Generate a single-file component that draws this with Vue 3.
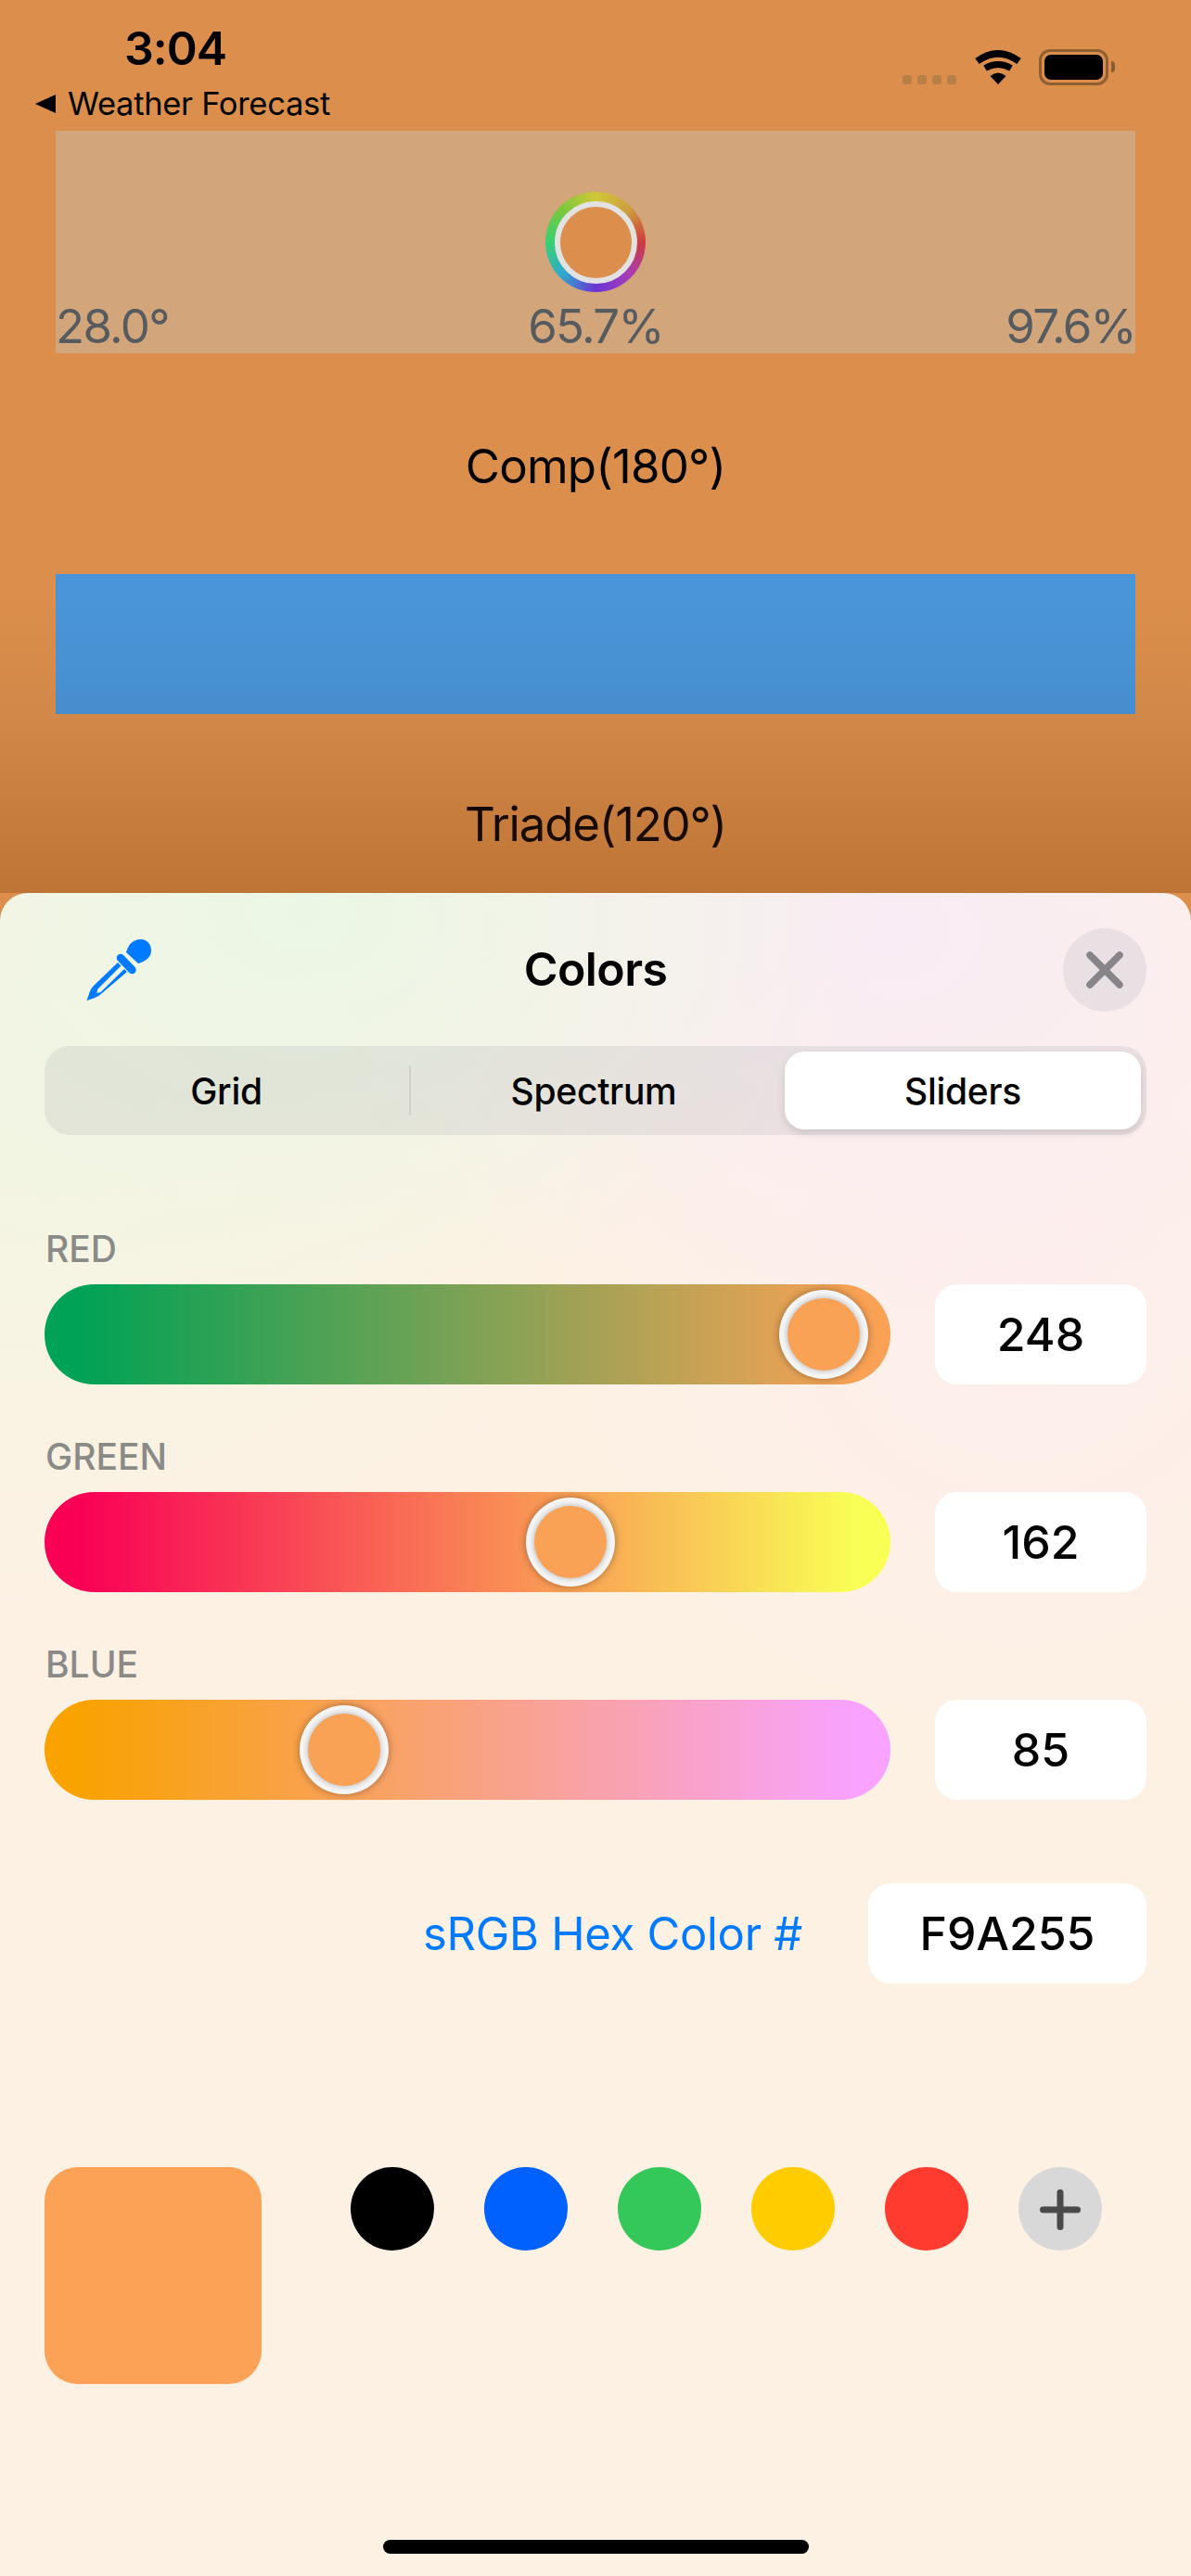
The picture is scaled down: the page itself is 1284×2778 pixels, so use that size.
<template>
  <div class="screen">
    <div class="backdrop">
      <div class="status">
        <div class="status-left">
          <div class="time">3:04</div>
          <div class="back-row">
            <span class="back-arrow"></span>
            <span class="back-text">Weather Forecast</span>
          </div>
        </div>
        <div class="status-right">
          <div class="signal">
            <span v-for="n in 4" :key="n" class="dot"></span>
          </div>
          <svg class="wifi" width="50" height="37" viewBox="0 0 50 37">
            <path d="M2.5 12Q25 -4.4 47.5 12" fill="none" stroke="#000" stroke-width="7.5" />
            <path d="M11 19.5Q25 11.5 39 19.5" fill="none" stroke="#000" stroke-width="7" />
            <path d="M25 37L16.5 28Q25 21 33.5 28Z" fill="#000" />
          </svg>
          <div class="battery">
            <div class="battery-fill"></div>
          </div>
          <span class="battery-nub"></span>
        </div>
      </div>

      <div class="picker">
        <div class="ring">
          <div class="ring-inner"></div>
        </div>
        <div class="picker-values">
          <span>28.0°</span>
          <span class="mid">65.7%</span>
          <span class="end">97.6%</span>
        </div>
      </div>

      <div class="harmony-title comp">Comp(180°)</div>
      <div class="harmony-bar"></div>
      <div class="harmony-title triade">Triade(120°)</div>

      <div class="dim"></div>
    </div>

    <div class="sheet">
      <div class="sheet-header">
        <svg class="dropper" width="72" height="72" viewBox="23 10 72 72">
          <path d="M66 27C68 20 72 13 82 13C89 13 93 19 93 25C93 33 86 37 79 39Z" fill="#007aff" />
          <path d="M60 33L72.5 46" stroke="#007aff" stroke-width="8.5" stroke-linecap="round" />
          <path fill-rule="evenodd" fill="#007aff" d="M57 38L32 62Q27 67 26 72L23.5 79L31 76.5Q36 75 40 71L67 48ZM60.5 41.5L35 67L34.5 71L38.5 70L64 45Z" />
        </svg>
        <div class="sheet-title">Colors</div>
        <button class="close">
          <svg width="44" height="44" viewBox="0 0 44 44">
            <path d="M6 6L38 38M38 6L6 38" stroke="#87848a" stroke-width="7.5" stroke-linecap="round" />
          </svg>
        </button>
      </div>

      <div class="segments">
        <div class="segment first">Grid</div>
        <div class="segment second">Spectrum</div>
        <div class="segment selected">Sliders</div>
      </div>

      <div class="sliders">
        <div v-for="s in sliders" :key="s.label" class="slider-row">
          <div class="slider-label">{{ s.label }}</div>
          <div class="slider-line">
            <div class="track" :style="{ background: s.gradient }">
              <div class="thumb" :style="{ left: thumbLeft(s.value) + 'px' }">
                <div class="thumb-inner"></div>
              </div>
            </div>
            <div class="value-box">{{ s.value }}</div>
          </div>
        </div>
      </div>

      <div class="hex-row">
        <span class="hex-label">sRGB Hex Color #</span>
        <div class="hex-box">F9A255</div>
      </div>

      <div class="palette">
        <div class="current"></div>
        <div class="swatches">
          <span v-for="c in swatches" :key="c" class="swatch" :style="{ background: c }"></span>
          <span class="swatch add">
            <svg class="plus" width="44" height="44" viewBox="0 0 44 44">
              <path d="M22 3.5V40.5" stroke="#4a4a4a" stroke-width="7" stroke-linecap="round" />
              <path d="M3.5 22H40.5" stroke="#4a4a4a" stroke-width="7" stroke-linecap="round" />
            </svg>
          </span>
        </div>
      </div>

      <div class="home-bar"></div>
    </div>
  </div>
</template>

<script setup>
const sliders = [
  { label: 'RED', value: 248, gradient: 'linear-gradient(90deg, rgb(0,162,85) 4%, rgb(249,162,85) 96%)' },
  { label: 'GREEN', value: 162, gradient: 'linear-gradient(90deg, rgb(249,0,85) 4%, rgb(249,255,85) 96%)' },
  { label: 'BLUE', value: 85, gradient: 'linear-gradient(90deg, rgb(249,162,0) 4%, rgb(249,162,255) 96%)' }
]

const swatches = ['#000000', '#0061fe', '#34c759', '#ffcc00', '#ff3b30']

// the thumb's centre moves about 3.17px for each step of the value
const thumbLeft = (value) => 53 + value * 3.174
</script>

<style scoped>
.screen {
  width: 1284px;
  height: 2778px;
  overflow: hidden;
  background: #dc8f4c;
  font-family: Inter, "Liberation Sans", sans-serif;
  color: #000;
}

.backdrop {
  position: relative;
  height: 963px;
  overflow: hidden;
}

.dim {
  position: absolute;
  inset: 0;
  background: linear-gradient(180deg, rgba(0, 0, 0, 0) 640px, rgba(0, 0, 0, 0.05) 770px, rgba(120, 55, 0, 0.3) 963px);
}

.status {
  display: flex;
  justify-content: space-between;
  height: 141px;
  padding: 0 82px 0 38px;
  box-sizing: border-box;
}

.time {
  margin: 22px 0 0 96px;
  font-size: 50px;
  font-weight: 600;
  line-height: 60px;
  letter-spacing: -1px;
}

.back-row {
  display: flex;
  align-items: center;
  gap: 13px;
  margin-top: 12px;
}

.back-arrow {
  width: 0;
  height: 0;
  border-top: 10px solid transparent;
  border-bottom: 10px solid transparent;
  border-right: 22px solid #000;
}

.back-text {
  font-size: 34.5px;
  line-height: 36px;
  letter-spacing: -0.3px;
}

.status-right {
  display: flex;
  align-items: flex-end;
  height: 92px;
}

.signal {
  display: flex;
  gap: 6px;
  margin: 0 20px 1px 0;
}

.dot {
  width: 10px;
  height: 10px;
  border-radius: 3px;
  background: #b87f48;
}

.wifi {
  margin: 0 19px 1px 0;
}

.battery {
  width: 75px;
  height: 39px;
  padding: 3px;
  box-sizing: border-box;
  border: 3px solid #8f5f34;
  border-radius: 12px;
}

.battery-fill {
  width: 100%;
  height: 100%;
  border-radius: 7px;
  background: #000;
}

.battery-nub {
  width: 4px;
  height: 12px;
  margin: 0 0 14px 3px;
  border-radius: 0 6px 6px 0;
  background: #8a5a30;
}

.picker {
  display: flex;
  flex-direction: column;
  align-items: center;
  height: 240px;
  margin: 0 60px;
  box-sizing: border-box;
  padding-top: 66px;
  background: #d3a57b;
}

.ring {
  display: flex;
  flex-shrink: 0;
  align-items: center;
  justify-content: center;
  width: 108px;
  height: 108px;
  border-radius: 50%;
  background: conic-gradient(#d0c836 0deg, #cc9f40 45deg, #d03c3c 90deg, #a83cb8 135deg, #6a35d4 180deg, #30a8d0 225deg, #38d070 270deg, #7cc83c 315deg, #d0c836 360deg);
}

.ring-inner {
  width: 77px;
  height: 77px;
  border: 6px solid #e2e2e2;
  border-radius: 50%;
  background: #dc8f4c;
}

.picker-values {
  display: grid;
  grid-template-columns: 1fr 1fr 1fr;
  align-self: stretch;
  margin-top: 9px;
  font-size: 51px;
  line-height: 56px;
  letter-spacing: -1.7px;
  color: #555b5f;
}

.mid {
  text-align: center;
}

.end {
  text-align: right;
}

.harmony-title {
  font-size: 51px;
  line-height: 60px;
  text-align: center;
  letter-spacing: -0.8px;
}

.comp {
  padding: 92px 0 86px;
}

.harmony-bar {
  height: 151px;
  margin: 0 60px;
  background: #4a95d9;
}

.triade {
  padding: 89px 0;
  letter-spacing: -1.2px;
}

.sheet {
  height: 1815px;
  padding: 38px 48px 0;
  box-sizing: border-box;
  border-radius: 30px 30px 0 0;
  background:
    radial-gradient(620px 420px at 330px 20px, #ebf7e6 0%, rgba(235, 247, 230, 0) 100%),
    radial-gradient(640px 440px at 950px 40px, #f9ecf5 0%, rgba(249, 236, 245, 0) 100%),
    radial-gradient(500px 500px at 1100px 430px, #fdeeec 0%, rgba(253, 238, 236, 0) 100%),
    radial-gradient(700px 500px at 0 300px, #f4f5e2 0%, rgba(244, 245, 226, 0) 100%),
    #fdf1e4;
}

.sheet-header {
  display: grid;
  grid-template-columns: 1fr auto 1fr;
  align-items: center;
  height: 90px;
}

.dropper {
  margin-left: 45px;
}

.sheet-title {
  margin-top: -2px;
  font-size: 50px;
  font-weight: 600;
  letter-spacing: -0.6px;
}

.close {
  display: flex;
  align-items: center;
  justify-content: center;
  justify-self: end;
  width: 90px;
  height: 90px;
  padding: 0;
  border: none;
  border-radius: 50%;
  background: #e8e0e3;
}

.segments {
  display: grid;
  grid-template-columns: 389px 403px 384px;
  height: 96px;
  margin-top: 37px;
  padding: 6px;
  box-sizing: border-box;
  border-radius: 27px;
  background: rgba(118, 118, 128, 0.12);
}

.segment {
  display: flex;
  align-items: center;
  justify-content: center;
  font-size: 39px;
  font-weight: 500;
  letter-spacing: -0.3px;
}

.first {
  padding-right: 9px;
  position: relative;
}

.first::after {
  content: "";
  position: absolute;
  right: 0;
  top: 15px;
  bottom: 15px;
  width: 2px;
  background: #d0d0c8;
}

.second {
  padding-right: 9px;
}

.selected {
  border-radius: 21px;
  background: #fff;
  box-shadow: 0 4px 10px rgba(0, 0, 0, 0.12);
}

.sliders {
  display: flex;
  flex-direction: column;
  gap: 53px;
  margin-top: 98px;
}

.slider-label {
  height: 48px;
  margin-bottom: 15px;
  padding: 1px 0 0 1px;
  box-sizing: border-box;
  font-size: 39px;
  font-weight: 500;
  line-height: 48px;
  color: #8a8a88;
}

.slider-line {
  display: flex;
  justify-content: space-between;
}

.track {
  position: relative;
  width: 912px;
  height: 108px;
  border-radius: 54px;
}

.thumb {
  position: absolute;
  top: 6px;
  display: flex;
  align-items: center;
  justify-content: center;
  width: 96px;
  height: 96px;
  margin-left: -48px;
  border-radius: 50%;
  background: #f6f6f6;
  box-shadow: 0 0 8px rgba(0, 0, 0, 0.35);
}

.thumb-inner {
  width: 78px;
  height: 78px;
  border-radius: 50%;
  background: #f9a255;
  box-shadow: 0 0 7px rgba(0, 0, 0, 0.3);
}

.value-box {
  display: flex;
  align-items: center;
  justify-content: center;
  width: 228px;
  height: 108px;
  border-radius: 24px;
  background: #fff;
  font-size: 50px;
  font-weight: 500;
}

.hex-row {
  display: flex;
  align-items: center;
  justify-content: flex-end;
  gap: 71px;
  margin-top: 90px;
}

.hex-label {
  font-size: 49px;
  color: #007aff;
  letter-spacing: -0.3px;
}

.hex-box {
  display: flex;
  align-items: center;
  justify-content: center;
  width: 300px;
  height: 108px;
  border-radius: 24px;
  background: #fff;
  font-size: 50px;
  font-weight: 500;
}

.palette {
  display: flex;
  align-items: flex-start;
  gap: 96px;
  margin-top: 198px;
}

.current {
  width: 234px;
  height: 234px;
  border-radius: 36px;
  background: #fba257;
}

.swatches {
  display: flex;
  gap: 54px;
}

.swatch {
  display: flex;
  align-items: center;
  justify-content: center;
  width: 90px;
  height: 90px;
  border-radius: 50%;
}

.add {
  background: #d8d8d8;
}

.plus {
  margin-top: 2px;
}

.home-bar {
  width: 459px;
  height: 15px;
  margin: 168px auto 0;
  border-radius: 8px;
  background: #000;
}
</style>
